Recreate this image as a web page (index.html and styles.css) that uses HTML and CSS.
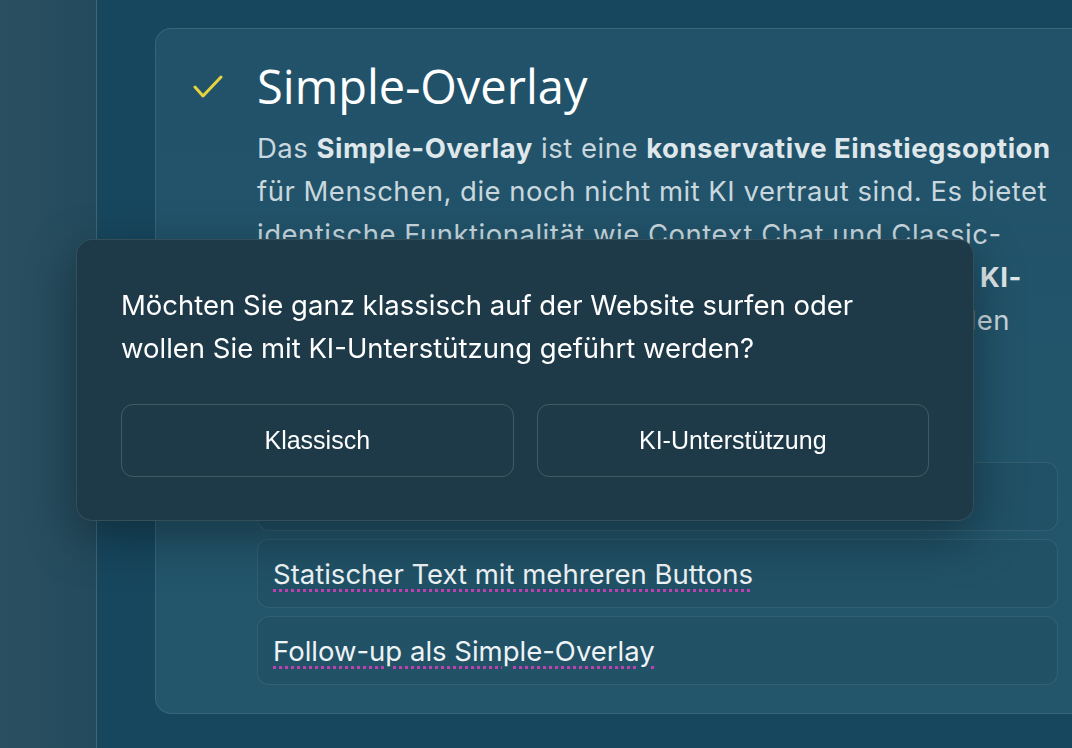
FILE: index.html
```html
<!DOCTYPE html>
<html lang="de">
<head>
  <meta charset="UTF-8">
  <meta name="viewport" content="width=device-width, initial-scale=1.0">
  <title>Simple-Overlay</title>
  <link rel="stylesheet" href="styles.css">
</head>
<body>

  <div class="sidebar"></div>

  <div class="main">
    <div class="card">
      <div class="check">
        <svg width="32" height="26" viewBox="0 0 32 26">
          <polyline points="3,12 11,21 29,2" fill="none" stroke="#e6d23f" stroke-width="3" stroke-linecap="round" stroke-linejoin="round"/>
        </svg>
      </div>
      <div class="content">
        <h2 class="title">Simple-Overlay</h2>
        <p class="desc">
          Das <b>Simple-Overlay</b> ist eine <b>konservative Einstiegsoption</b>
          für Menschen, die noch nicht mit KI vertraut sind. Es bietet
          identische Funktionalität wie Context Chat und Classic-Overlay,
          blendet jedoch zunächst keine aufdringliche <b>KI-Unterstützung</b>
          ein, sondern lässt die Nutzer frei wählen
          zwischen klassischem Surfen und einer geführten
          Navigationshilfe durch die Inhalte.
        </p>
        <div class="variants">
          <div class="variant"><span class="mark">Einfache Ja/Nein-Frage</span></div>
          <div class="variant"><span class="mark">Statischer Text mit mehreren Buttons</span></div>
          <div class="variant"><span class="mark">Follow-up als Simple-Overlay</span></div>
        </div>
      </div>
    </div>
  </div>

  <div class="overlay">
    <p class="overlay-text">Möchten Sie ganz klassisch auf der Website surfen oder wollen Sie mit KI-Unterstützung geführt werden?</p>
    <div class="overlay-buttons">
      <button class="overlay-btn">Klassisch</button>
      <button class="overlay-btn">KI-Unterstützung</button>
    </div>
  </div>

</body>
</html>
```

FILE: styles.css
```css
* {
  margin: 0;
  padding: 0;
  box-sizing: border-box;
}

body {
  font-family: 'Inter', 'Liberation Sans', sans-serif;
  background: #17475e;
  height: 100vh;
  display: flex;
  flex-direction: row;
  overflow: hidden;
  color: #fff;
}

.sidebar {
  width: 97px;
  min-width: 97px;
  height: 100vh;
  background: linear-gradient(to right, #2a4f60, #234b5d);
  border-right: 1px solid rgba(255,255,255,0.12);
}

.main {
  flex: 1;
  padding: 28px 0 0 58px;
  display: flex;
  align-items: flex-start;
  overflow: hidden;
}

.card {
  flex-shrink: 0;
  width: 940px;
  display: flex;
  padding: 28px 36px 28px 36px;
  background: linear-gradient(180deg, #21526a, #23566b);
  border: 1px solid rgba(255,255,255,0.1);
  border-radius: 16px;
}

.check {
  width: 65px;
  min-width: 65px;
  padding-top: 18px;
}

.check svg {
  display: block;
}

.content {
  flex: 1;
}

.title {
  font-family: 'Open Sans', sans-serif;
  font-weight: 400;
  font-size: 47px;
  line-height: 58px;
  color: #fff;
  margin-bottom: 12px;
}

.desc {
  font-size: 27.5px;
  line-height: 43px;
  letter-spacing: 0.5px;
  color: #c9d7de;
  margin-bottom: 34px;
}

.desc b {
  font-weight: 700;
  color: #dfe7eb;
}

.variants {
  display: flex;
  flex-direction: column;
  gap: 8px;
}

.variant {
  height: 69px;
  display: flex;
  align-items: center;
  padding: 0 15px;
  font-size: 27.5px;
  color: #eef3f6;
  background: rgba(0,0,0,0.04);
  border: 1px solid rgba(255,255,255,0.08);
  border-radius: 12px;
}

.mark {
  text-decoration: underline dotted #c23fb2;
  text-decoration-thickness: 2.5px;
  text-underline-offset: 5px;
}

/* Overlay liegt über der Karte */
.overlay {
  position: fixed;
  left: 76px;
  top: 239px;
  width: 898px;
  height: 282px;
  padding: 44px 44px 43px 44px;
  background: #1e3a48;
  border: 1px solid rgba(255,255,255,0.1);
  border-radius: 16px;
  box-shadow: 0 16px 50px rgba(0,0,0,0.35);
  display: flex;
  flex-direction: column;
  justify-content: space-between;
}

.overlay-text {
  font-size: 27.5px;
  line-height: 43px;
  color: #fff;
}

.overlay-buttons {
  display: flex;
  gap: 23px;
}

.overlay-btn {
  flex: 1;
  height: 73px;
  font-family: 'Liberation Sans', Arial, sans-serif;
  font-size: 25px;
  color: #fff;
  background: transparent;
  border: 1px solid rgba(255,255,255,0.16);
  border-radius: 12px;
  cursor: pointer;
}
```
